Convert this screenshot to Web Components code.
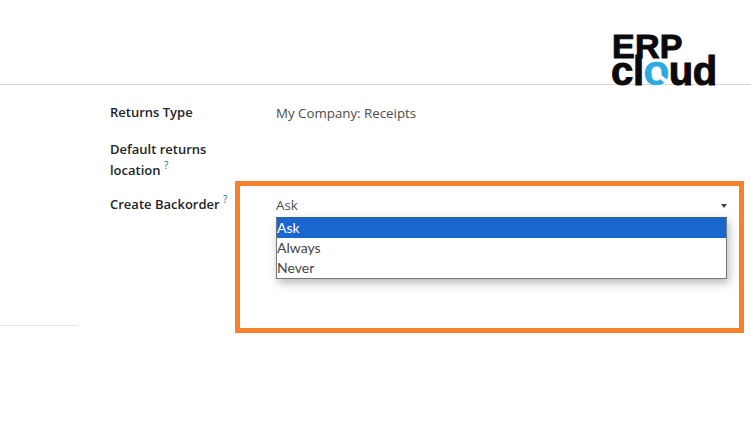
<!DOCTYPE html>
<html lang="en"><head><meta charset="utf-8"><title>Create Backorder</title>
<style>html,body{margin:0;background:#fff}body{width:751px;height:430px;overflow:hidden;font-family:"Open Sans","Noto Sans",sans-serif;}</style>
</head><body>
<erp-header></erp-header>
<erp-form>
  <erp-field label="Returns Type" style="--after:15px"><span style="display:block;padding-top:1px">My Company: Receipts</span></erp-field>
  <erp-field label="Default returns location" help style="--after:13px"></erp-field>
  <erp-field label="Create Backorder" help><erp-select value="Ask" options="Ask,Always,Never"></erp-select></erp-field>
</erp-form>
<script>
function def(name, html){
  customElements.define(name, class extends HTMLElement{
    constructor(){super();this.attachShadow({mode:'open'}).innerHTML=html;}
  });
}
def('erp-logo',`<style>
:host{display:block;width:106px;height:51px;color:#0b0b0d;font-family:"Liberation Sans",Arial,sans-serif;font-weight:700;-webkit-text-stroke:1px #0b0b0d}
div{display:flex;white-space:nowrap}
.a{font-size:34px;line-height:26px;height:23px;letter-spacing:.2px;padding-left:1px}
.b{font-size:40px;line-height:28px;height:28px;letter-spacing:-.3px;align-items:baseline}
.o{color:#29aae2;font-size:43px;-webkit-text-stroke:.4px #29aae2;position:relative;line-height:28px;margin:0 -.5px}
.o::after{content:"";position:absolute;right:2px;bottom:3px;width:8px;height:4px;background:#fff;transform:rotate(40deg)}
</style><div class="a">ERP</div><div class="b"><span>cl</span><span class="o">o</span><span>ud</span></div>`);
def('erp-header',`<style>
:host{display:flex;justify-content:flex-end;box-sizing:border-box;height:85px;padding:33px 34px 0 0;border-bottom:1px solid #d8d8d8}
</style><erp-logo></erp-logo>`);
def('erp-form',`<style>
:host{display:block;position:relative;height:240px}
.rows{display:flex;flex-direction:column;padding:17px 24px 0 110px}
.note{position:absolute;left:235px;top:96px;width:509px;height:152px;box-sizing:border-box;border:5px solid #f5812c;pointer-events:none}
.rule{position:absolute;left:0;top:240px;width:78px;height:1px;background:#e6e6e6}
</style><div class="rows"><slot></slot></div><div class="note"></div><div class="rule"></div>`);
customElements.define('erp-field',class extends HTMLElement{
  constructor(){super();this.attachShadow({mode:'open'}).innerHTML=`<style>
:host{display:grid;grid-template-columns:166px 1fr;min-height:21px;margin-bottom:var(--after,0);font-size:13.3px;line-height:21px;color:#4c4c4c}
.l{font-size:13px;font-weight:600;color:#212529;width:125px}
sup{font-size:10px;line-height:0;color:#017e84;font-weight:400;vertical-align:6px}
</style><div class="l"></div><div><slot></slot></div>`;}
  connectedCallback(){
    const l=this.shadowRoot.querySelector('.l');
    l.textContent=this.getAttribute('label');
    if(this.hasAttribute('help')){const s=document.createElement('sup');s.textContent='?';l.append(' ',s);}
  }
});
customElements.define('erp-select',class extends HTMLElement{
  constructor(){super();this.attachShadow({mode:'open'}).innerHTML=`<style>
:host{display:block;position:relative;height:22px;padding-top:1px;color:#4c4c4c}
.v{display:flex;justify-content:space-between;align-items:center}
.c{width:0;height:0;border-style:solid;border-color:#444 transparent transparent;border-width:4px 3.5px 0}
.menu{position:absolute;left:0;top:23px;width:451px;box-sizing:border-box;border:1px solid #707a80;border-top-color:#336b73;background:#fff;box-shadow:2px 4px 9px rgba(0,0,0,.28);font-family:Lato,"Open Sans",sans-serif;font-size:14px;line-height:20px}
.o{height:20px;color:#444}
.o.on{background:#1a66cf;color:#fff}
</style><div class="v"><span class="t"></span><i class="c"></i></div><div class="menu"></div>`;}
  connectedCallback(){
    const r=this.shadowRoot,val=this.getAttribute('value');
    r.querySelector('.t').textContent=val;
    const m=r.querySelector('.menu');
    for(const x of this.getAttribute('options').split(',')){
      const d=document.createElement('div');d.className='o'+(x===val?' on':'');d.textContent=x;m.append(d);
    }
  }
});
</script>
</body></html>
